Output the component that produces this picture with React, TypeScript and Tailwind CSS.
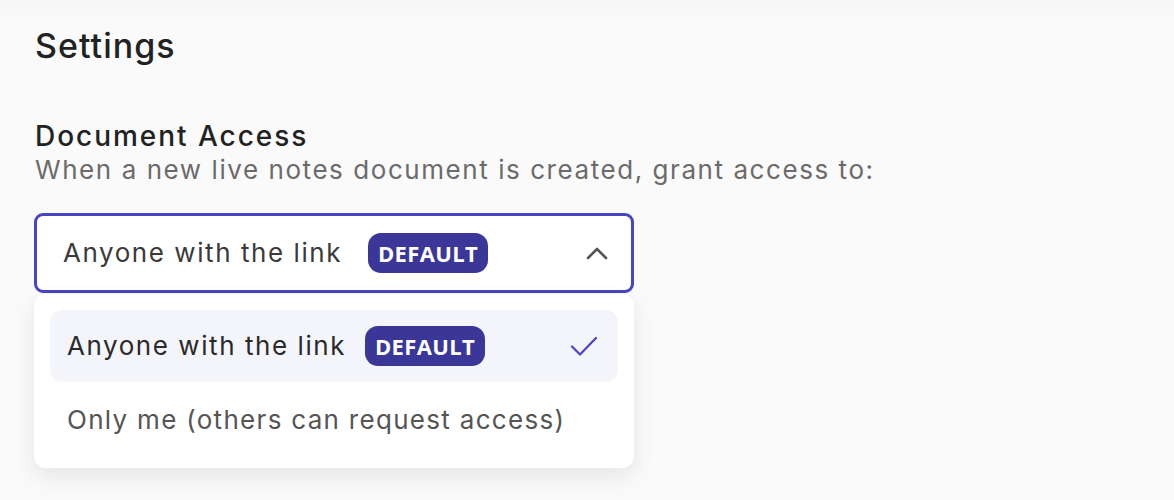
function Badge() {
  return (
    <span className="inline-flex h-[40px] shrink-0 items-center rounded-[13px] bg-[#3b3799] px-[10px] font-['Open_Sans',sans-serif] text-[22px] font-bold tracking-[0.015em] text-white">
      DEFAULT
    </span>
  );
}

export default function App() {
  return (
    <div className="min-h-[500px] w-full bg-[#fafafa] font-['Inter',sans-serif] text-[#222]">
      <div className="h-[20px] bg-gradient-to-b from-[#f6f6f6] to-[#fafafa]" />
      <div className="px-[34px] pt-[6px]">
        <h1 className="pl-[1px] text-[34px] font-medium leading-[40px] tracking-[0.03em]">Settings</h1>

        <div className="mt-[53px] pl-[1px]">
          <h2 className="text-[28px] font-medium leading-[34px] tracking-[0.07em]">Document Access</h2>
          <p className="text-[26px] leading-[34px] tracking-[0.06em] text-[#6b6b6b]">
            When a new live notes document is created, grant access to:
          </p>
        </div>

        <div className="mt-[26px] w-[600px]">
          <button
            type="button"
            className="flex h-[80px] w-full items-center rounded-[9px] border-[3px] border-[#4a43c4] bg-white pl-[26px] pr-[22px] text-left"
          >
            <span className="text-[26px] leading-[34px] tracking-[0.06em] text-[#3a3a3a]">Anyone with the link</span>
            <span className="ml-[26px]">
              <Badge />
            </span>
            <svg className="ml-auto" width="24" height="16" viewBox="0 0 24 16" fill="none">
              <polyline points="3,13 12,4 21,13" stroke="#555" strokeWidth="2.6" strokeLinecap="round" strokeLinejoin="round" />
            </svg>
          </button>

          <div className="mt-[1px] rounded-[12px] bg-white px-[16px] pb-[10px] pt-[16px] shadow-[0_8px_24px_rgba(0,0,0,0.09)]">
            <div className="flex h-[72px] items-center rounded-[12px] bg-[#f4f5fb] pl-[17px] pr-[19px]">
              <span className="text-[26px] leading-[34px] tracking-[0.06em] text-[#2a2a2a]">Anyone with the link</span>
              <span className="ml-[19px]">
                <Badge />
              </span>
              <svg className="ml-auto" width="30" height="24" viewBox="0 0 30 24" fill="none">
                <polyline points="3,12.5 11,20.5 27,4" stroke="#4a43c4" strokeWidth="2.2" strokeLinecap="round" strokeLinejoin="round" />
              </svg>
            </div>
            <div className="flex h-[76px] items-center pl-[17px]">
              <span className="text-[26px] leading-[34px] tracking-[0.05em] text-[#555]">Only me (others can request access)</span>
            </div>
          </div>
        </div>
      </div>
    </div>
  );
}
